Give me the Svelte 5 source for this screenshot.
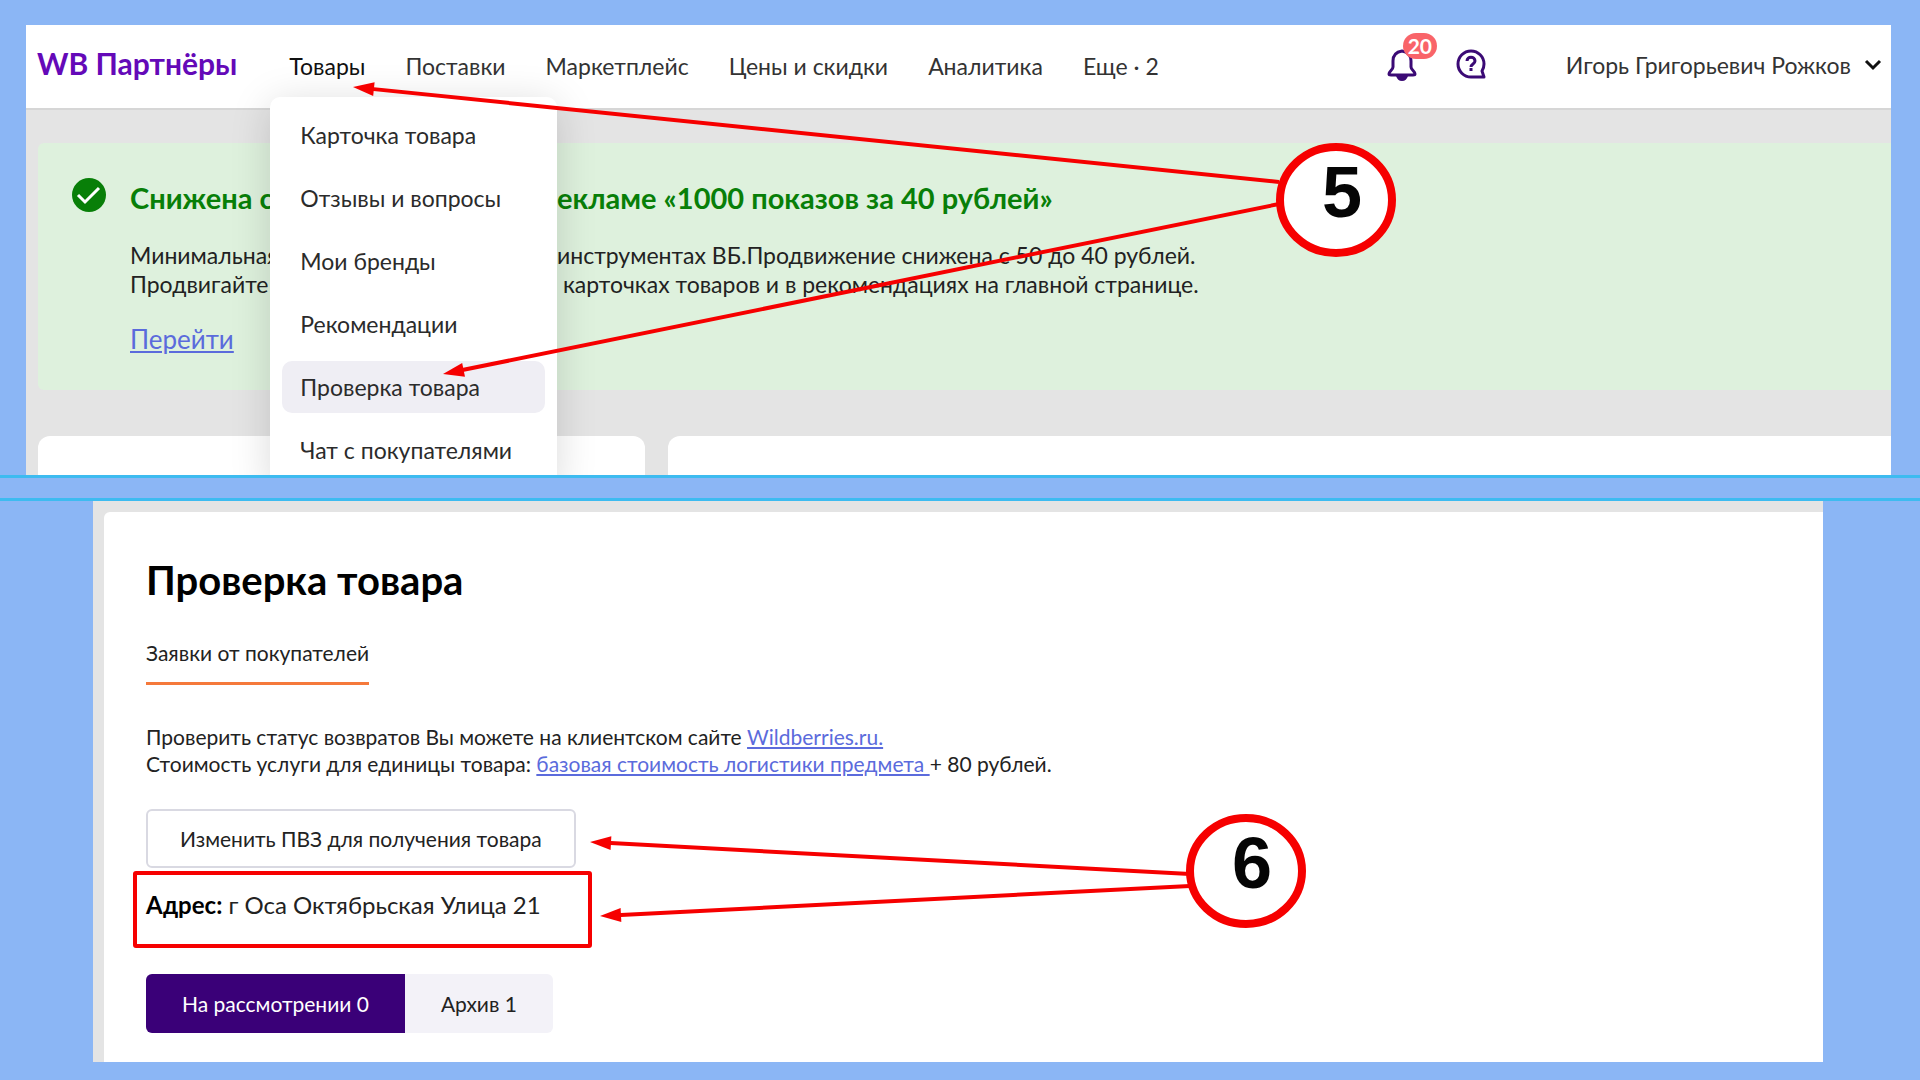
<script>
  const navItems = [
    "Поставки",
    "Маркетплейс",
    "Цены и скидки",
    "Аналитика",
    "Еще · 2",
  ];

  const menuItems = [
    "Карточка товара",
    "Отзывы и вопросы",
    "Мои бренды",
    "Рекомендации",
    "Проверка товара",
    "Чат с покупателями",
  ];

  const arrows = [
    { from: [1279, 182], to: [353, 87] },
    { from: [1279, 204], to: [443, 374] },
    { from: [1190, 874], to: [590, 842] },
    { from: [1190, 886], to: [600, 916] },
  ];

  const steps = [
    { label: "5", x: 1336, y: 200 },
    { label: "6", x: 1246, y: 871 },
  ];

  let activeItem = 4;
  let requestTab = "pending";

  function angle({ from, to }) {
    return (Math.atan2(to[1] - from[1], to[0] - from[0]) * 180) / Math.PI;
  }

  function length({ from, to }) {
    return Math.hypot(to[0] - from[0], to[1] - from[1]);
  }
</script>

<main>
  <section class="portal">
    <header>
      <div class="left">
        <a class="logo" href="#home">WB Партнёры</a>
        <nav>
          <div class="dropdown">
            <a class="nav-link current" href="#goods">Товары</a>
            <div class="menu">
              {#each menuItems as item, i}
                <button
                  class="menu-item"
                  class:active={activeItem === i}
                  on:click={() => (activeItem = i)}>{item}</button
                >
              {/each}
            </div>
          </div>
          {#each navItems as item}
            <a class="nav-link" href="#nav">{item}</a>
          {/each}
        </nav>
      </div>
      <div class="tools">
        <button class="tool" aria-label="Уведомления">
          <svg width="32" height="34" viewBox="0 0 32 34">
            <path
              d="M16 3C10 4 7 8 7 13v6c0 3-4 4-4 7 0 1 1 1 2 1h22c1 0 2 0 2-1 0-3-4-4-4-7v-6c0-5-3-9-9-10Z"
              fill="none"
              stroke="#3b0a75"
              stroke-width="3"
              stroke-linejoin="round"
            />
            <path d="M10 28h12c-1 3-3 5-6 5s-5-2-6-5Z" fill="#3b0a75" />
          </svg>
          <span class="badge">20</span>
        </button>
        <button class="tool" aria-label="Помощь">
          <svg width="32" height="34" viewBox="0 0 32 34">
            <path
              d="M29 16A13 13 0 1 0 16 29H29L27 23A13 13 0 0 0 29 16Z"
              fill="none"
              stroke="#3b0a75"
              stroke-width="3"
              stroke-linejoin="round"
            />
            <path
              d="M12 13c0-5 8-5 8 0 0 3-4 3-4 6M16 20v3"
              fill="none"
              stroke="#3b0a75"
              stroke-width="3"
            />
          </svg>
        </button>
      </div>
      <button class="user">
        Игорь Григорьевич Рожков
        <svg width="18" height="12" viewBox="0 0 18 12">
          <path d="M2 2l7 7 7-7" fill="none" stroke="#111" stroke-width="3" />
        </svg>
      </button>
    </header>

    <div class="content">
      <article class="notice">
        <svg width="36" height="36" viewBox="0 0 36 36">
          <circle cx="18" cy="18" r="17" fill="#087f08" />
          <path
            d="M7 18l7 7 14-14"
            fill="none"
            stroke="#fff"
            stroke-width="3"
          />
        </svg>
        <div>
          <!-- the open menu covers the middle of every line -->
          <h2>
            <span class="lead">Снижена с</span>екламе «1000 показов за 40
            рублей»
          </h2>
          <p>
            <span class="lead">Минимальная</span>инструментах ВБ.Продвижение
            снижена с 50 до 40 рублей.<br />
            <span class="lead">Продвигайте</span>&nbsp;карточках товаров и в
            рекомендациях на главной странице.
          </p>
          <a class="go" href="#go">Перейти</a>
        </div>
      </article>
      <div class="cards">
        <div class="card"></div>
        <div class="card wide"></div>
      </div>
    </div>
  </section>

  <div class="divider"></div>

  <section class="check-page">
    <div class="sheet">
      <h1>Проверка товара</h1>
      <a class="tab" href="#requests">Заявки от покупателей</a>
      <p class="info">
        Проверить статус возвратов Вы можете на клиентском сайте
        <a href="#wb">Wildberries.ru.</a><br />
        Стоимость услуги для единицы товара:
        <a href="#price">базовая стоимость логистики предмета&nbsp;</a>+ 80
        рублей.
      </p>
      <button class="change">Изменить ПВЗ для получения товара</button>
      <p class="address"><b>Адрес:</b> г Оса Октябрьская Улица 21</p>
      <div class="switch">
        <button
          class:selected={requestTab === "pending"}
          on:click={() => (requestTab = "pending")}>На рассмотрении 0</button
        >
        <button
          class:selected={requestTab === "archive"}
          on:click={() => (requestTab = "archive")}>Архив 1</button
        >
      </div>
    </div>
  </section>

  <svg class="marks" viewBox="0 0 1920 1080" preserveAspectRatio="xMinYMin">
    {#each arrows as arrow}
      <g
        transform="translate({arrow.from[0]} {arrow.from[1]}) rotate({angle(
          arrow,
        )})"
      >
        <line x2={length(arrow) - 16} stroke="#f60000" stroke-width="4" />
        <path
          transform="translate({length(arrow)} 0)"
          d="M0 0L-21 -7V7Z"
          fill="#f60000"
        />
      </g>
    {/each}
    {#each steps as step}
      <ellipse
        cx={step.x}
        cy={step.y}
        rx="56"
        ry="53"
        fill="#fff"
        stroke="#f60000"
        stroke-width="8"
      />
      <text x={step.x + 6} y={step.y + 17} text-anchor="middle"
        >{step.label}</text
      >
    {/each}
  </svg>
</main>

<style>
  :global(body) {
    margin: 0;
    background: #8bb6f5;
  }

  main {
    position: relative;
    padding: 25px 0 18px;
    font-family: Lato, "Noto Sans", sans-serif;
    color: #222;
  }

  button {
    border: 0;
    background: none;
    padding: 0;
    font: inherit;
    color: inherit;
    cursor: pointer;
  }

  h1,
  h2,
  p {
    margin: 0;
  }

  .portal {
    margin: 0 29px 0 26px;
    height: 450px;
    overflow: hidden;
    background: #e4e4e4;
  }

  header {
    display: flex;
    align-items: center;
    height: 85px;
    padding: 0 9px 4px 11px;
    border-bottom: 2px solid #d6d6d6;
    box-sizing: border-box;
    background: #fff;
    font-size: 23px;
    line-height: 28px;
    white-space: nowrap;
  }

  .left {
    display: flex;
    align-items: baseline;
  }

  .logo {
    color: #6409b8;
    font-size: 30px;
    font-weight: 700;
    text-decoration: none;
  }

  nav {
    display: flex;
    gap: 40px;
    margin-left: 52px;
  }

  .nav-link {
    color: #333;
    text-decoration: none;
  }

  .nav-link.current {
    color: #111;
  }

  .dropdown {
    position: relative;
  }

  .menu {
    position: absolute;
    z-index: 1;
    top: 45px;
    left: -19px;
    display: flex;
    flex-direction: column;
    gap: 11px;
    width: 287px;
    box-sizing: border-box;
    padding: 12px;
    background: #fff;
    border-radius: 10px 10px 0 0;
    box-shadow: 0 6px 40px rgba(0, 0, 0, 0.15);
  }

  .menu-item {
    height: 52px;
    padding: 0 18px;
    border-radius: 10px;
    color: #2b2b2b;
    text-align: left;
  }

  .menu-item.active {
    background: #efeef4;
  }

  .tools {
    display: flex;
    gap: 37px;
    margin-left: auto;
    margin-right: 79px;
  }

  .tool {
    position: relative;
    display: flex;
    align-items: center;
  }

  .badge {
    position: absolute;
    top: -15px;
    left: 17px;
    width: 34px;
    border-radius: 13px;
    background: #f96469;
    color: #fff;
    font-size: 21px;
    font-weight: 700;
    line-height: 26px;
  }

  .user {
    display: flex;
    align-items: center;
    gap: 13px;
    color: #333;
  }

  .content {
    padding: 33px 0 0 12px;
  }

  .notice {
    display: flex;
    gap: 23px;
    height: 247px;
    box-sizing: border-box;
    padding: 34px 33px 0;
    border-radius: 6px 0 0 6px;
    background: #def1dd;
    white-space: nowrap;
  }

  h2 {
    color: #087f08;
    font-size: 29px;
    line-height: 42px;
  }

  .lead {
    display: inline-block;
    width: 427px;
  }

  .notice p {
    margin-top: 22px;
    font-size: 23px;
    line-height: 29px;
  }

  .go {
    display: inline-block;
    margin-top: 23px;
    font-size: 26px;
    line-height: 34px;
  }

  .go,
  .info a {
    color: #5b6bdc;
  }

  .cards {
    display: flex;
    gap: 23px;
    margin-top: 46px;
  }

  .card {
    flex: 607;
    height: 60px;
    border-radius: 12px 12px 0 0;
    background: #fff;
  }

  .card.wide {
    flex: 1223;
    border-top-right-radius: 0;
  }

  .divider {
    height: 20px;
    border: solid #3dbbf0;
    border-width: 3px 0;
  }

  .check-page {
    margin: 0 97px 0 93px;
    padding: 11px 0 0 11px;
    background: #e4e4e4;
  }

  .sheet {
    display: flex;
    flex-direction: column;
    align-items: flex-start;
    padding: 44px 42px 29px;
    border-radius: 6px 0 0 0;
    background: #fff;
  }

  h1 {
    color: #000;
    font-size: 40px;
    line-height: 48px;
  }

  .tab {
    margin-top: 35px;
    padding-bottom: 15px;
    border-bottom: 3px solid #f5793b;
    color: inherit;
    font-size: 21px;
    line-height: 28px;
    text-decoration: none;
  }

  .info {
    margin-top: 38px;
    font-size: 21px;
    line-height: 27px;
  }

  .change {
    height: 59px;
    margin-top: 32px;
    padding: 0 32px;
    border: 2px solid #d9d9e2;
    border-radius: 6px;
    font-size: 21px;
  }

  .address {
    width: 459px;
    box-sizing: border-box;
    margin: 3px 0 0 -13px;
    padding: 16px 9px 26px;
    border: 4px solid #f60000;
    border-radius: 3px;
    font-size: 24px;
    line-height: 27px;
  }

  .address b {
    color: #000;
  }

  .switch {
    display: flex;
    margin-top: 26px;
    border-radius: 6px;
    overflow: hidden;
    background: #f3f2f8;
    font-size: 21px;
  }

  .switch button {
    height: 59px;
    padding: 0 36px;
  }

  .switch .selected {
    background: #3a0078;
    color: #fff;
  }

  .marks {
    position: absolute;
    top: 0;
    left: 0;
    z-index: 2;
    width: 100%;
    pointer-events: none;
  }

  .marks text {
    font-family: "Liberation Sans", Arial, sans-serif;
    font-size: 72px;
    font-weight: 700;
    fill: #050505;
  }
</style>
